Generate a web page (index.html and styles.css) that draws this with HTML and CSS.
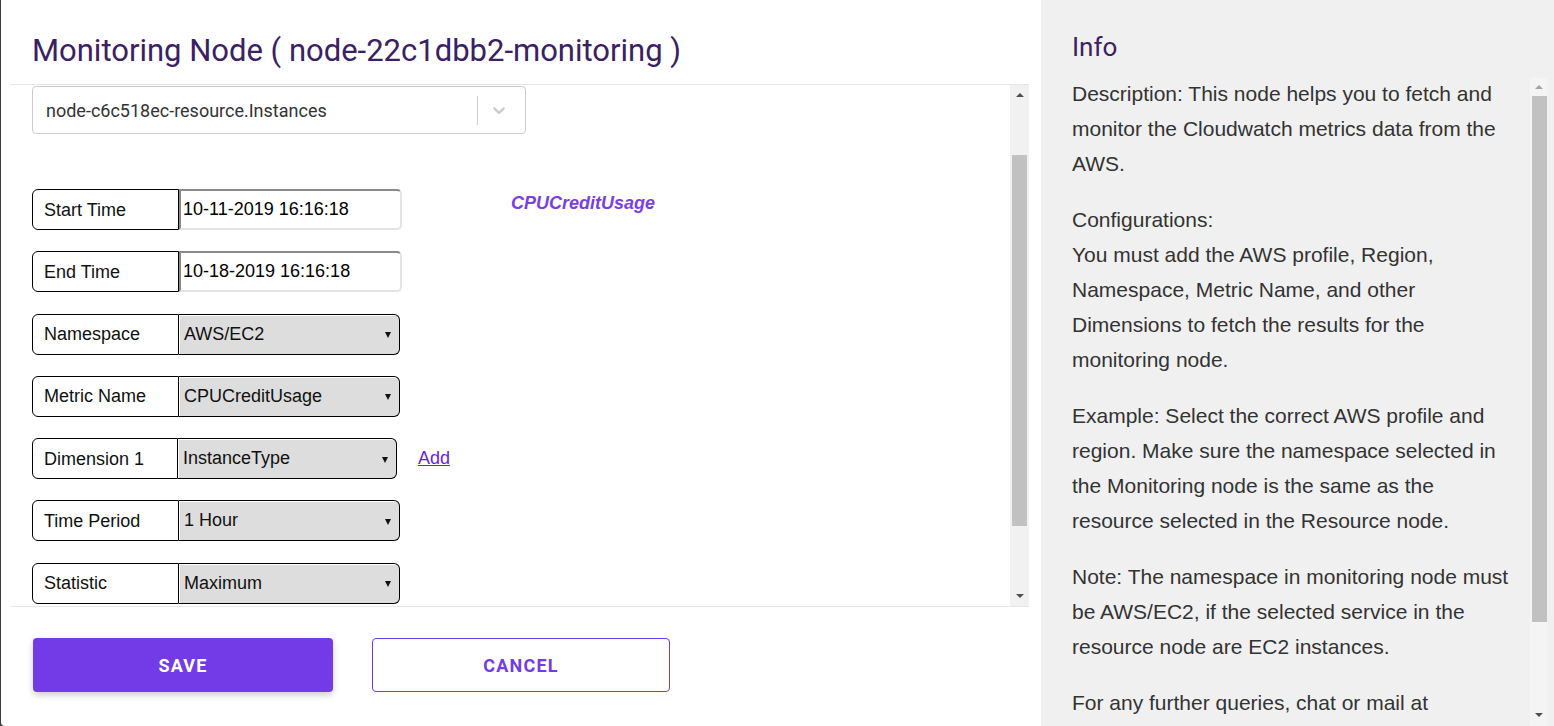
FILE: index.html
```html
<!DOCTYPE html>
<html lang="en">
<head>
  <meta charset="UTF-8">
  <meta name="viewport" content="width=device-width, initial-scale=1.0">
  <title>Monitoring Node</title>
  <link rel="stylesheet" href="styles.css">
</head>
<body>
  <div class="modal">
    <div class="modal-main">
      <div class="modal-header">
        <h2 class="modal-title">Monitoring Node ( node-22c1dbb2-monitoring )</h2>
      </div>

      <div class="scroll-wrap form-wrap">
        <div class="form-body" id="form-body">
          <div class="resource-select">
            <span class="resource-value">node-c6c518ec-resource.Instances</span>
            <span class="resource-sep"></span>
            <span class="resource-chevron">
              <svg width="20" height="20" viewBox="0 0 20 20"><path fill="#cccccc" d="M4.516 7.548c0.436-0.446 1.043-0.481 1.576 0l3.908 3.747 3.908-3.747c0.533-0.481 1.141-0.446 1.574 0 0.436 0.445 0.408 1.197 0 1.615-0.406 0.418-4.695 4.502-4.695 4.502-0.217 0.223-0.502 0.335-0.787 0.335s-0.57-0.112-0.789-0.335c0 0-4.287-4.084-4.695-4.502s-0.436-1.17 0-1.615z"/></svg>
            </span>
          </div>

          <div class="form-grid">
            <div class="fields">
              <div class="field">
                <div class="field-label">Start Time</div>
                <input class="field-input" type="text" value="10-11-2019 16:16:18">
              </div>
              <div class="field">
                <div class="field-label">End Time</div>
                <input class="field-input" type="text" value="10-18-2019 16:16:18">
              </div>
              <div class="field">
                <div class="field-label">Namespace</div>
                <div class="field-select"><span>AWS/EC2</span><span class="caret"></span></div>
              </div>
              <div class="field">
                <div class="field-label">Metric Name</div>
                <div class="field-select"><span>CPUCreditUsage</span><span class="caret"></span></div>
              </div>
              <div class="field">
                <div class="field-label narrow">Dimension 1</div>
                <div class="field-select narrow"><span>InstanceType</span><span class="caret"></span></div>
                <a href="#" class="add-link">Add</a>
              </div>
              <div class="field">
                <div class="field-label">Time Period</div>
                <div class="field-select"><span>1 Hour</span><span class="caret"></span></div>
              </div>
              <div class="field">
                <div class="field-label">Statistic</div>
                <div class="field-select"><span>Maximum</span><span class="caret"></span></div>
              </div>
            </div>
            <div class="metric-preview">
              <span class="metric-title">CPUCreditUsage</span>
            </div>
          </div>
        </div>

        <div class="scrollbar">
          <span class="scroll-arrow up"></span>
          <span class="scroll-thumb"></span>
          <span class="scroll-arrow down"></span>
        </div>
      </div>

      <div class="modal-actions">
        <button class="btn btn-save">Save</button>
        <button class="btn btn-cancel">Cancel</button>
      </div>
    </div>

    <div class="info-panel">
      <h3 class="info-title">Info</h3>
      <div class="scroll-wrap info-wrap">
        <div class="info-body">
          <p>Description: This node helps you to fetch and monitor the Cloudwatch metrics data from the AWS.</p>
          <p>Configurations:<br>You must add the AWS profile, Region, Namespace, Metric Name, and other Dimensions to fetch the results for the monitoring node.</p>
          <p>Example: Select the correct AWS profile and region. Make sure the namespace selected in the Monitoring node is the same as the resource selected in the Resource node.</p>
          <p>Note: The namespace in monitoring node must be AWS/EC2, if the selected service in the resource node are EC2 instances.</p>
          <p>For any further queries, chat or mail at support@totalcloud.io</p>
        </div>

        <div class="scrollbar">
          <span class="scroll-arrow up disabled"></span>
          <span class="scroll-thumb"></span>
          <span class="scroll-arrow down"></span>
        </div>
      </div>
    </div>
  </div>

  <script src="script.js"></script>
</body>
</html>
```

FILE: styles.css
```css
/* Page */
body {
  margin: 0;
  height: 100vh;
  overflow: hidden;
  background: #3d3d3d;
  font-family: Roboto, "Liberation Sans", Arial, sans-serif;
}

.modal {
  display: flex;
  height: 100vh;
  margin-left: 1px;
  background: white;
  border-bottom-left-radius: 4px;
  overflow: hidden;
}

/* Left side: form */
.modal-main {
  width: 1040px;
  flex-shrink: 0;
  display: flex;
  flex-direction: column;
  padding: 0 12px 0 9px;
  box-sizing: border-box;
}

.modal-header {
  height: 85px;
  padding: 32px 22px 0;
  box-sizing: border-box;
  border-bottom: 1px solid #e6e6ea;
}

.modal-title {
  margin: 0;
  font-size: 31px;
  line-height: 38px;
  font-weight: 400;
  color: #3a2163;
}

/* fake scrollbars (the real ones are hidden in screenshots) */
.scroll-wrap {
  position: relative;
}

.scrollbar {
  position: absolute;
  top: 0;
  right: 0;
  bottom: 0;
  width: 17px;
  background: #f1f1f1;
}

.scroll-thumb {
  position: absolute;
  left: 2px;
  width: 15px;
  background: #c1c1c1;
}

.scroll-arrow {
  position: absolute;
  left: 5px;
  width: 0;
  height: 0;
  border-left: 4px solid transparent;
  border-right: 4px solid transparent;
}

.scroll-arrow.up {
  border-bottom: 4px solid #505050;
}

.scroll-arrow.up.disabled {
  border-bottom-color: #a3a3a3;
}

.scroll-arrow.down {
  border-top: 4px solid #505050;
}

.form-wrap {
  height: 522px;
  border-bottom: 1px solid #e6e6ea;
  box-sizing: border-box;
}

.form-wrap .scrollbar {
  width: 19px;
}

.form-wrap .scroll-thumb {
  top: 70px;
  height: 371px;
}

.form-wrap .scroll-arrow {
  left: 6px;
}

.form-wrap .scroll-arrow.up {
  top: 8px;
}

.form-wrap .scroll-arrow.down {
  bottom: 8px;
}

.form-body {
  height: 100%;
  overflow: hidden;
  padding: 78px 40px 92px 22px;
  box-sizing: border-box;
}

.resource-select {
  width: 494px;
  height: 48px;
  display: flex;
  align-items: center;
  border: 1px solid #cccccc;
  border-radius: 4px;
  box-sizing: border-box;
}

.resource-value {
  flex: 1;
  padding-left: 13px;
  font-size: 18px;
  color: #333;
}

.resource-sep {
  width: 1px;
  height: 29px;
  background: #cccccc;
}

.resource-chevron {
  display: flex;
  padding: 0 16px 0 11px;
}

.form-grid {
  display: flex;
  margin-top: 55px;
}

.fields {
  width: 479px;
  display: flex;
  flex-direction: column;
  gap: 21.3px;
}

.field {
  display: flex;
  align-items: center;
  height: 41px;
  font-family: "Liberation Sans", Arial, sans-serif;
  font-size: 18px;
  color: #111;
}

.field-label {
  width: 147px;
  height: 100%;
  display: flex;
  align-items: center;
  padding: 1px 0 0 11px;
  border: 1px solid #000;
  border-radius: 6px 0 0 6px;
  box-sizing: border-box;
}

.field-label.narrow {
  width: 146px;
}

.field-input {
  width: 223px;
  height: 100%;
  padding: 0 0 0 2px;
  margin: 0;
  font-family: "Liberation Sans", Arial, sans-serif;
  font-size: 18px;
  color: #000;
  border-style: solid;
  border-width: 2px;
  border-color: #8a8a8a #e4e4e4 #e4e4e4 #8a8a8a;
  border-radius: 0 5px 5px 0;
  box-sizing: border-box;
  outline: none;
}

.field-select {
  width: 221px;
  height: 100%;
  display: flex;
  align-items: center;
  justify-content: space-between;
  padding: 0 8px 0 5px;
  background: #dddddd;
  border: 1px solid #000;
  border-left: 0;
  border-radius: 0 6px 6px 0;
  box-shadow: inset 1px 1px 0 #fff;
  box-sizing: border-box;
}

.field-select.narrow {
  width: 219px;
}

.caret {
  width: 0;
  height: 0;
  border-left: 3.5px solid transparent;
  border-right: 3.5px solid transparent;
  border-top: 6px solid #111;
  margin-top: 2px;
}

.add-link {
  margin-left: 21px;
  color: #6a24e0;
}

.metric-preview {
  padding-top: 4px;
}

.metric-title {
  font-family: "Liberation Sans", Arial, sans-serif;
  font-size: 18px;
  font-weight: bold;
  font-style: italic;
  color: #7a3ee8;
}

/* Buttons */
.modal-actions {
  display: flex;
  gap: 39px;
  padding: 31px 22px 0 23px;
}

.btn {
  width: 300px;
  height: 54px;
  border-radius: 4px;
  font-family: Roboto, sans-serif;
  font-size: 18px;
  font-weight: 700;
  letter-spacing: 1.2px;
  text-transform: uppercase;
  cursor: pointer;
}

.btn-save {
  background: #733be8;
  color: white;
  border: none;
  box-shadow: 0 3px 7px rgba(0, 0, 0, 0.2);
}

.btn-cancel {
  width: 298px;
  background: white;
  color: #733be8;
  border: 1px solid #733be8;
}

/* Right side: info */
.info-panel {
  flex: 1;
  background: #f0f0f0;
  padding: 32px 7px 0 31px;
  display: flex;
  flex-direction: column;
}

.info-title {
  margin: 0 0 16px;
  height: 30px;
  font-size: 26px;
  line-height: 30px;
  font-weight: 400;
  color: #3a2163;
}

.info-wrap {
  flex: 1;
  min-height: 0;
}

.info-wrap .scrollbar {
  background: #f4f4f4;
}

.info-wrap .scroll-thumb {
  top: 18px;
  height: 526px;
}

.info-wrap .scroll-arrow.up {
  top: 7px;
}

.info-wrap .scroll-arrow.down {
  bottom: 9px;
}

.info-body {
  height: 100%;
  overflow: hidden;
  padding-right: 33px;
}

.info-body p {
  margin: 0 0 21px;
  font-family: "Liberation Sans", Arial, sans-serif;
  font-size: 21px;
  line-height: 35px;
  color: #333;
}

.info-body p:first-child {
  margin-top: -2px;
}
```

FILE: script.js
```js
// keep the form scrolled like in the running app
document.getElementById("form-body").scrollTop = 77;
```
